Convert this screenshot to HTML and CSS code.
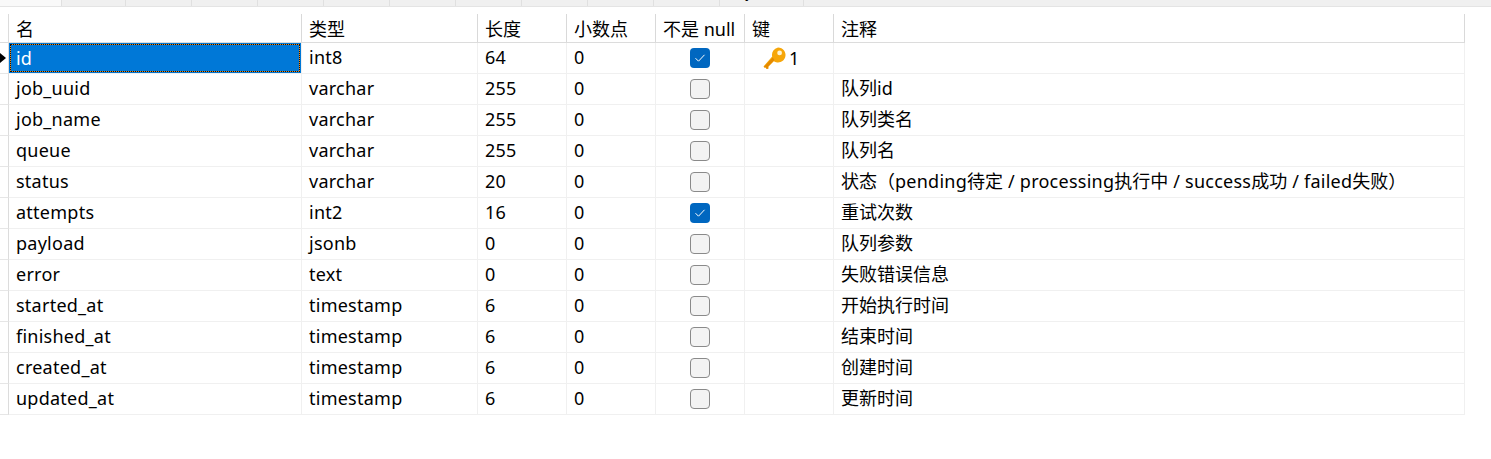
FILE: index.html
```html
<!DOCTYPE html>
<html lang="en">
<head>
    <meta charset="UTF-8">
    <meta name="viewport" content="width=device-width, initial-scale=1.0">
    <title>表设计</title>
    <link rel="stylesheet" href="styles.css">
</head>
<body>
    <div class="tabs">
        <div class="tab">字段</div>
        <div class="tab">索引</div>
        <div class="tab">外键</div>
        <div class="tab">唯一键</div>
        <div class="tab">检查</div>
        <div class="tab">排除</div>
        <div class="tab">规则</div>
        <div class="tab">触发器</div>
        <div class="tab">选项</div>
        <div class="tab">注释</div>
        <div class="tab wider">SQL 预览</div>
    </div>

    <table class="fields">
        <thead>
            <tr>
                <th class="c-mark"></th>
                <th class="c-name">名</th>
                <th class="c-type">类型</th>
                <th class="c-num">长度</th>
                <th class="c-num">小数点</th>
                <th class="c-num">不是 null</th>
                <th class="c-num">键</th>
                <th class="c-note">注释</th>
            </tr>
        </thead>
        <tbody>
            <tr>
                <td class="c-mark"><svg class="arrow" width="7" height="12" viewBox="0 0 7 12"><polygon points="0,1 6,6 0,11"/></svg></td>
                <td class="selected"><div class="focus">id</div></td>
                <td class="en">int8</td><td class="en">64</td><td class="en">0</td>
                <td class="center"><span class="check on"><svg width="20" height="20" viewBox="0 0 20 20"><path d="M5.5 10.2l3 3 6-6.4" fill="none" stroke="#fff" stroke-width="1"/></svg></span></td>
                <td>
                    <div class="key">
                        <svg width="23" height="22" viewBox="0 0 23 22">
                            <path d="M15 0.5a7.5 7.5 0 1 1-4.2 13.7L5.5 19.5v2.2H3.2v-1.2H1.4L0.5 19.6 9.2 9.6A7.5 7.5 0 0 1 15 0.5z" fill="#f6a609"/>
                            <path d="M1 19.8L9.8 10.6l1.6 2.4-6.4 6.8v1.9H3.2v-1.2H1.4z" fill="#e58a00"/>
                            <circle cx="16.6" cy="5.9" r="2.4" fill="#fff3cf"/>
                        </svg>
                        <span>1</span>
                    </div>
                </td>
                <td></td>
            </tr>
            <tr><td class="c-mark"></td><td class="en">job_uuid</td><td class="en">varchar</td><td class="en">255</td><td class="en">0</td><td class="center"><span class="check"></span></td><td></td><td>队列id</td></tr>
            <tr><td class="c-mark"></td><td class="en">job_name</td><td class="en">varchar</td><td class="en">255</td><td class="en">0</td><td class="center"><span class="check"></span></td><td></td><td>队列类名</td></tr>
            <tr><td class="c-mark"></td><td class="en">queue</td><td class="en">varchar</td><td class="en">255</td><td class="en">0</td><td class="center"><span class="check"></span></td><td></td><td>队列名</td></tr>
            <tr><td class="c-mark"></td><td class="en">status</td><td class="en">varchar</td><td class="en">20</td><td class="en">0</td><td class="center"><span class="check"></span></td><td></td><td>状态（<span class="en">pending</span>待定<span class="en"> / processing</span>执行中<span class="en"> / success</span>成功<span class="en"> / failed</span>失败）</td></tr>
            <tr><td class="c-mark"></td><td class="en">attempts</td><td class="en">int2</td><td class="en">16</td><td class="en">0</td><td class="center"><span class="check on"><svg width="20" height="20" viewBox="0 0 20 20"><path d="M5.5 10.2l3 3 6-6.4" fill="none" stroke="#fff" stroke-width="1"/></svg></span></td><td></td><td>重试次数</td></tr>
            <tr><td class="c-mark"></td><td class="en">payload</td><td class="en">jsonb</td><td class="en">0</td><td class="en">0</td><td class="center"><span class="check"></span></td><td></td><td>队列参数</td></tr>
            <tr><td class="c-mark"></td><td class="en">error</td><td class="en">text</td><td class="en">0</td><td class="en">0</td><td class="center"><span class="check"></span></td><td></td><td>失败错误信息</td></tr>
            <tr><td class="c-mark"></td><td class="en">started_at</td><td class="en">timestamp</td><td class="en">6</td><td class="en">0</td><td class="center"><span class="check"></span></td><td></td><td>开始执行时间</td></tr>
            <tr><td class="c-mark"></td><td class="en">finished_at</td><td class="en">timestamp</td><td class="en">6</td><td class="en">0</td><td class="center"><span class="check"></span></td><td></td><td>结束时间</td></tr>
            <tr><td class="c-mark"></td><td class="en">created_at</td><td class="en">timestamp</td><td class="en">6</td><td class="en">0</td><td class="center"><span class="check"></span></td><td></td><td>创建时间</td></tr>
            <tr><td class="c-mark"></td><td class="en">updated_at</td><td class="en">timestamp</td><td class="en">6</td><td class="en">0</td><td class="center"><span class="check"></span></td><td></td><td>更新时间</td></tr>
        </tbody>
    </table>
</body>
</html>
```

FILE: styles.css
```css
body {
    margin: 0;
    background: #fff;
    color: #000;
    font-family: "Noto Sans", "Noto Sans CJK SC", sans-serif;
    font-size: 18px;
}

/* only the bottom edge of the tab bar is in view */
.tabs {
    display: flex;
    align-items: flex-end;
    height: 6px;
    overflow: hidden;
    padding-left: 61px;
    background: linear-gradient(to right, #f9f9f9 61px, #f0f0f0 61px);
    border-bottom: 1px solid #e4e4e4;
    margin-bottom: 7px;
}
.tab {
    flex: none;
    box-sizing: border-box;
    width: 66px;
    height: 30px;
    padding-left: 6px;
    line-height: 30px;
    border-left: 1px solid #e0e0e0;
}
.tab:first-child {
    width: 64px;
}
.tab.wider {
    width: 85px;
    border-right: 1px solid #e0e0e0;
}

.fields {
    table-layout: fixed;
    border-collapse: separate;
    border-spacing: 0;
    width: 1465px;
}
.fields th {
    height: 28px;
    padding: 0 0 0 7px;
    font-weight: normal;
    text-align: left;
    border-right: 1px solid #d9d9d9;
    border-bottom: 1px solid #dcdcdc;
    white-space: nowrap;
}
.fields td {
    height: 30px;
    padding: 0 0 0 7px;
    line-height: 29px;
    vertical-align: top;
    border-right: 1px solid #f0f0f0;
    border-bottom: 1px solid #f0f0f0;
    white-space: nowrap;
}
.fields th.c-mark, .fields td.c-mark {
    padding: 0;
    border-right-color: #dcdcdc;
    line-height: 0;
    vertical-align: middle;
}
.fields td.c-mark {
    border-bottom-color: #e6e6e6;
}
.c-mark { width: 8px; }
.c-name { width: 285px; }
.c-type { width: 168px; }
.c-num { width: 81px; }

/* the latin text in the reference runs a little wider than Noto Sans */
.en { letter-spacing: 0.25px; }

.arrow { fill: #000; }

.fields td.selected {
    padding: 0;
    background: #0078d7;
    color: #fff;
}
.focus {
    box-sizing: border-box;
    height: 28px;
    margin: 1px;
    padding-left: 5px;
    line-height: 26px;
    border: 1px dotted #111;
    background: #e98a1c;
    box-shadow: inset 0 0 0 40px #0078d7;
}

.fields td.center {
    padding: 0;
    text-align: center;
    line-height: 0;
    vertical-align: middle;
}
.check {
    display: inline-block;
    box-sizing: border-box;
    width: 20px;
    height: 20px;
    border: 1px solid #8a8a8a;
    border-radius: 4px;
    background: #f3f3f3;
    vertical-align: middle;
}
.check.on {
    border: 0;
    background: #0067c0;
}

.key {
    display: flex;
    align-items: center;
    gap: 3px;
    height: 30px;
    padding-left: 11px;
}
```
